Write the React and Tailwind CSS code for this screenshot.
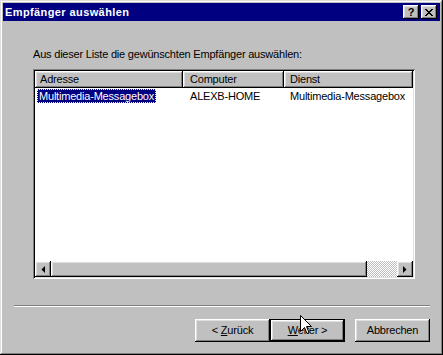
const raised =
  "shadow-[inset_-1px_-1px_#000,inset_1px_1px_#fff,inset_-2px_-2px_#808080,inset_2px_2px_#dfdfdf]";

function Arrow({ dir }) {
  return (
    <svg width="4" height="7" viewBox="0 0 4 7">
      {dir === "left" ? <polygon points="4,0 4,7 0.5,3.5" fill="#000" /> : <polygon points="0,0 0,7 3.5,3.5" fill="#000" />}
    </svg>
  );
}

function Button({ children, isDefault }) {
  if (isDefault) {
    return (
      <div className="w-[75px] h-[23px] border border-black">
        <div className={`w-full h-full flex items-center justify-center bg-[#c0c0c0] ${raised}`}>{children}</div>
      </div>
    );
  }
  return (
    <div className={`w-[75px] h-[23px] flex items-center justify-center bg-[#c0c0c0] ${raised}`}>{children}</div>
  );
}

export default function App() {
  return (
    <div className="relative w-[443px] h-[355px] bg-[#c0c0c0] p-[3px] flex flex-col font-['Liberation_Sans',Arial,sans-serif] text-[11px] tracking-[-0.2px] text-black shadow-[inset_-1px_-1px_#000,inset_1px_1px_#dfdfdf,inset_-2px_-2px_#808080,inset_2px_2px_#fff]">
      {/* title bar */}
      <div className="h-[18px] bg-[#000080] flex items-center pl-[2px] pr-[3px]">
        <span className="text-white font-bold tracking-[0.4px] leading-none">Empfänger auswählen</span>
        <div className="ml-auto flex gap-[2px]">
          <div className={`w-[16px] h-[14px] bg-[#c0c0c0] flex items-center justify-center font-bold text-[11px] leading-none tracking-normal ${raised}`}>
            ?
          </div>
          <div className={`w-[16px] h-[14px] bg-[#c0c0c0] flex items-center justify-center ${raised}`}>
            <svg width="8" height="7" viewBox="0 0 8 7">
              <path d="M0 0h2v1h1v1h2V1h1V0h2v1H7v1H6v1H5v1h1v1h1v1h1v1H6V6H5V5H3v1H2v1H0V6h1V5h1V4h1V3H2V2H1V1H0z" fill="#000" />
            </svg>
          </div>
        </div>
      </div>

      <div className="flex-1 flex flex-col">
        <div className="mt-[27px] ml-[30px] leading-[13px]">Aus dieser Liste die gewünschten Empfänger auswählen:</div>

        {/* list view */}
        <div className="mt-[8px] ml-[30px] w-[382px] h-[210px] p-[2px] bg-white shadow-[inset_1px_1px_#808080,inset_-1px_-1px_#fff,inset_2px_2px_#000,inset_-2px_-2px_#dfdfdf]">
          <div className="h-full flex flex-col">
            <div className="h-[17px] flex leading-[15px]">
              <div className={`w-[148px] bg-[#c0c0c0] pl-[5px] pt-[1px] ${raised}`}>Adresse</div>
              <div className={`w-[101px] bg-[#c0c0c0] pl-[7px] pt-[1px] ${raised}`}>Computer</div>
              <div className={`flex-1 bg-[#c0c0c0] pl-[6px] pt-[1px] ${raised}`}>Dienst</div>
            </div>
            <div className="h-[15px] flex items-center leading-[12px]">
              <div className="w-[148px] pl-[2px]">
                <span className="inline-block bg-[#000080] text-white border border-dotted border-[#ffff80] px-[1px]">
                  Multimedia-Messagebox
                </span>
              </div>
              <div className="w-[101px] pl-[7px]">ALEXB-HOME</div>
              <div className="flex-1 pl-[6px]">Multimedia-Messagebox</div>
            </div>
            <div className="flex-1" />
            {/* horizontal scrollbar */}
            <div className="h-[16px] flex">
              <div className={`w-[16px] bg-[#c0c0c0] flex items-center justify-center ${raised}`}>
                <Arrow dir="left" />
              </div>
              <div className={`w-[316px] bg-[#c0c0c0] ${raised}`} />
              <div className="flex-1 bg-[repeating-conic-gradient(#c0c0c0_0%_25%,#fff_0%_50%)] bg-[length:2px_2px]" />
              <div className={`w-[16px] bg-[#c0c0c0] flex items-center justify-center ${raised}`}>
                <Arrow dir="right" />
              </div>
            </div>
          </div>
        </div>

        {/* separator */}
        <div className="mt-[26px] ml-[11px] w-[416px] h-[2px] border-t border-t-[#808080] border-b border-b-white" />

        {/* buttons */}
        <div className="mt-[12px] ml-[192px] flex">
          <Button>
            <span className="whitespace-pre">{"< "}</span>
            <span className="underline">Z</span>urück
          </Button>
          <Button isDefault>
            <span className="underline">W</span>eiter
            <span className="whitespace-pre">{" >"}</span>
          </Button>
          <div className="ml-[10px]">
            <Button>Abbrechen</Button>
          </div>
        </div>
      </div>

      {/* mouse pointer */}
      <svg className="absolute left-[300px] top-[315px]" width="12" height="20" viewBox="0 0 12 20">
        <path d="M0.5 0.5V16.5L4.5 12.5L7 18.5L9 17.5L6.5 11.5H11.5Z" fill="#fff" stroke="#000" strokeWidth="1" />
      </svg>
    </div>
  );
}
